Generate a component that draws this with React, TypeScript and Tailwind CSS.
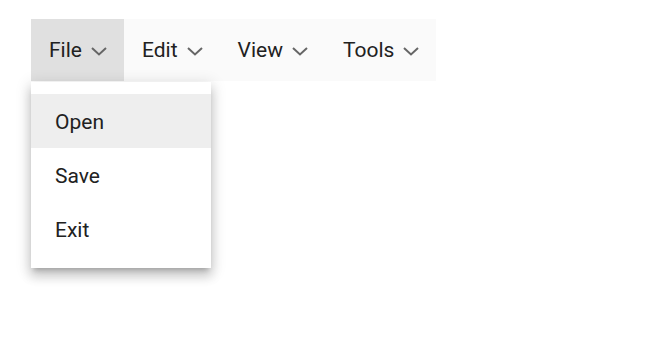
import { useState } from 'react'

const menus = ['File', 'Edit', 'View', 'Tools']
const fileItems = ['Open', 'Save', 'Exit']

function Chevron() {
  return (
    <svg viewBox="0 0 24 24" className="w-6 h-6 fill-none stroke-[#666666]" strokeWidth={2}>
      <path d="M5 9 12 15.5 19 9" />
    </svg>
  )
}

export default function App() {
  const [open] = useState('File')
  const [hovered] = useState('Open')

  return (
    <div
      className="min-h-[346px] bg-white pt-[19px] pl-[31px]"
      style={{ fontFamily: 'Roboto, "Liberation Sans", sans-serif' }}
    >
      <div className="relative inline-flex h-[62px] bg-[#fafafa] text-[21px] text-[#212121]">
        {menus.map((m) => (
          <div
            key={m}
            className={`relative flex items-center gap-[5px] pl-[18px] pr-[13px] pt-[2px] ${open === m ? 'bg-[#e0e0e0]' : ''}`}
          >
            <span>{m}</span>
            <Chevron />
            {open === m && (
              <div className="absolute left-0 top-[63px] z-10 w-[180px] bg-white py-3 shadow-[0_5px_5px_-3px_rgba(0,0,0,0.2),0_8px_10px_1px_rgba(0,0,0,0.14),0_3px_14px_2px_rgba(0,0,0,0.12)]">
                {fileItems.map((item) => (
                  <div
                    key={item}
                    className={`flex h-[54px] items-center px-6 pt-1 ${hovered === item ? 'bg-[#eeeeee]' : ''}`}
                  >
                    {item}
                  </div>
                ))}
              </div>
            )}
          </div>
        ))}
      </div>
    </div>
  )
}
